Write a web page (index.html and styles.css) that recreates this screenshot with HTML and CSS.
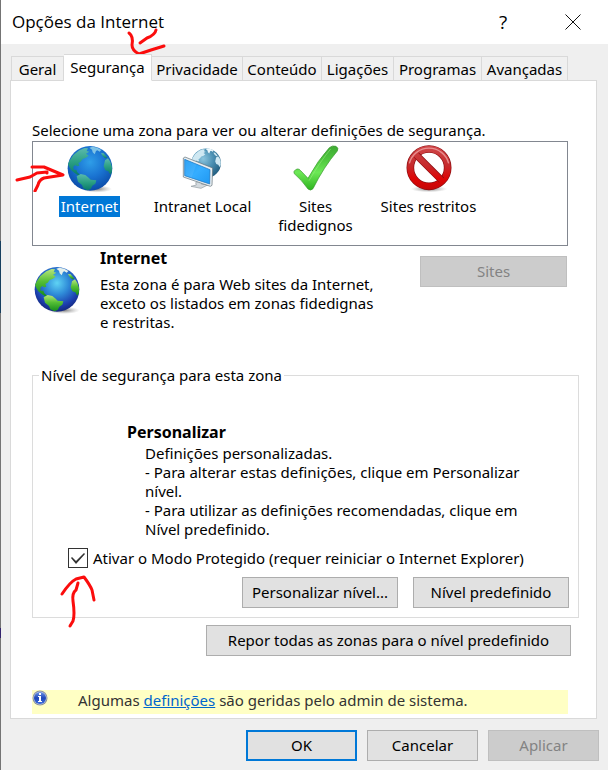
FILE: index.html
```html
<!DOCTYPE html>
<html lang="pt">
<head>
<meta charset="utf-8">
<meta name="viewport" content="width=device-width, initial-scale=1">
<title>Opções da Internet</title>
<link rel="stylesheet" href="styles.css">
</head>
<body>
<svg class="defs" aria-hidden="true">
  <defs>
    <radialGradient id="sea" cx=".5" cy=".36" r=".65"><stop offset="0" stop-color="#5fd3f4"/><stop offset=".4" stop-color="#2f8bd8"/><stop offset=".78" stop-color="#1c3fae"/><stop offset="1" stop-color="#13257a"/></radialGradient>
    <radialGradient id="sea-selected" cx=".5" cy=".36" r=".65"><stop offset="0" stop-color="#2f9ee8"/><stop offset=".5" stop-color="#1a74d2"/><stop offset="1" stop-color="#0b4aa8"/></radialGradient>
    <linearGradient id="land" x1="0" y1="0" x2="0" y2="1"><stop offset="0" stop-color="#b9e67c"/><stop offset=".45" stop-color="#55bf35"/><stop offset="1" stop-color="#138a1c"/></linearGradient>
    <linearGradient id="land-selected" x1="0" y1="0" x2="0" y2="1"><stop offset="0" stop-color="#5bb9ae"/><stop offset=".5" stop-color="#2ba083"/><stop offset="1" stop-color="#087a6a"/></linearGradient>
    <radialGradient id="steel" cx=".4" cy=".35" r=".7"><stop offset="0" stop-color="#8cc5de"/><stop offset=".5" stop-color="#4a8fb2"/><stop offset="1" stop-color="#1f5a7c"/></radialGradient>
    <linearGradient id="screen" x1="0" y1="0" x2="1" y2="1"><stop offset="0" stop-color="#1b9af4"/><stop offset=".5" stop-color="#35adff"/><stop offset="1" stop-color="#1f98f2"/></linearGradient>
    <linearGradient id="tick" x1="0" y1="0" x2="0" y2="1"><stop offset="0" stop-color="#3fa934"/><stop offset=".3" stop-color="#4dc63d"/><stop offset=".6" stop-color="#6de856"/><stop offset="1" stop-color="#2eb41f"/></linearGradient>
    <linearGradient id="ban" gradientUnits="userSpaceOnUse" x1="0" y1="2" x2="0" y2="134"><stop offset="0" stop-color="#d0484a"/><stop offset=".45" stop-color="#c62a2c"/><stop offset=".75" stop-color="#de0505"/><stop offset="1" stop-color="#c40808"/></linearGradient>
    <radialGradient id="shade"><stop offset="0" stop-color="#555" stop-opacity=".8"/><stop offset="1" stop-color="#999" stop-opacity="0"/></radialGradient>
    <linearGradient id="info" x1="0" y1="0" x2="0" y2="1"><stop offset="0" stop-color="#7098e8"/><stop offset=".5" stop-color="#2048b8"/><stop offset="1" stop-color="#3c6ce0"/></linearGradient>
    <g id="continents">
      <path d="M10 48L22 30 40 16 56 9 66 10 62 18 70 20 60 26 68 32 60 38 50 42 44 50 37 54 40 62 33 64 28 60 22 65 23 74 31 74 34 82 43 90 38 92 26 84 16 76 10 66 6 58z"/>
      <path d="M32 94L44 87 58 90 68 98 74 104 91 106 88 116 79 122 74 132 64 136 52 130 48 120 36 110z"/>
      <path d="M117 46L126 40 133 50 138 66 138 80 133 89 127 79 118 76 113 64z"/>
      <path d="M105 24L113 25 124 38 118 40 112 35 108 30z"/>
    </g>
    <path id="ice" d="M70 8L80 5 94 8 106 15 101 20 94 16 90 18 86 28 80 22 78 14z"/>
  </defs>
</svg>

<header class="titlebar">
  <h1 class="title">Opções da Internet</h1>
  <button class="caption" type="button" aria-label="Ajuda">?</button>
  <button class="caption" type="button" aria-label="Fechar">
    <svg width="16" height="16" viewBox="0 0 16 16"><path d="M.5.5L15.500 15.500M15.500.5L.5 15.500" stroke="#111" fill="none"/></svg>
  </button>
</header>

<main class="dialog">
  <div class="tabs" role="tablist">
    <button class="tab" type="button" role="tab">Geral</button>
    <button class="tab active" type="button" role="tab" aria-selected="true">Segurança</button>
    <button class="tab" type="button" role="tab">Privacidade</button>
    <button class="tab" type="button" role="tab">Conteúdo</button>
    <button class="tab" type="button" role="tab">Ligações</button>
    <button class="tab" type="button" role="tab">Programas</button>
    <button class="tab" type="button" role="tab">Avançadas</button>
  </div>

  <section class="panel" role="tabpanel">
    <p class="prompt">Selecione uma zona para ver ou alterar definições de segurança.</p>
    <div class="zones">
      <button class="zone" type="button">
        <svg width="48" height="48" viewBox="0 0 144 144"><ellipse cx="92" cy="132" rx="46" ry="11" fill="url(#shade)"/><circle cx="72" cy="70" r="67" fill="url(#sea-selected)"/><use href="#continents" fill="url(#land-selected)"/><use href="#ice" fill="#7fc3e6"/></svg>
        <span class="zone-name selected">Internet</span>
      </button>
      <button class="zone" type="button">
        <svg width="48" height="48" viewBox="0 0 144 144">
          <g transform="translate(34 7) scale(.66)"><circle cx="72" cy="72" r="67" fill="url(#steel)"/><use href="#continents" fill="#cfe8f2"/><use href="#ice" fill="#eef8fc"/></g>
          <path d="M50 113L66 105 68 118 88 119 66 130 36 124 52 120z" fill="#d4dade" stroke="#8e989f" stroke-width="2"/>
          <path d="M13 39L18 36 101 69 99 121 94 124 13 96z" fill="#e8eef1" stroke="#5c6c76" stroke-width="2"/>
          <path d="M17 43L93 74 92 117 17 92z" fill="url(#screen)" stroke="#1470bd" stroke-width="2"/>
          <path d="M18 44L52 58 38 98 18 91z" fill="#fff" opacity=".08"/>
        </svg>
        <span class="zone-name">Intranet Local</span>
      </button>
      <button class="zone" type="button">
        <svg width="48" height="48" viewBox="0 0 144 144"><path d="M6 85Q4 78 11 74L16 72Q22 71 26 77L48 100Q78 45 112 8Q121 0 132 4Q141 9 136 18Q95 66 63 131Q56 139 48 132Q30 106 6 85z" fill="url(#tick)" stroke="#35962b" stroke-width="2"/><path d="M51 107Q85 49 116 12" fill="none" stroke="#9bee86" stroke-width="3" opacity=".5"/></svg>
        <span class="zone-name">Sites<br>fidedignos</span>
      </button>
      <button class="zone" type="button">
        <svg width="48" height="48" viewBox="0 0 144 144"><ellipse cx="72" cy="132" rx="55" ry="10" fill="url(#shade)"/><circle cx="72" cy="68" r="56" fill="#fff" stroke="#8b0d10" stroke-width="23"/><circle cx="72" cy="68" r="56" fill="none" stroke="url(#ban)" stroke-width="19"/><path d="M34 30L110 106" stroke="#8b0d10" stroke-width="21"/><path d="M33 29L111 107" stroke="url(#ban)" stroke-width="17"/><path d="M13 55A61 61 0 0 1 131 55" fill="none" stroke="#efa3a3" stroke-width="4" opacity=".8"/></svg>
        <span class="zone-name">Sites restritos</span>
      </button>
    </div>

    <div class="zone-info">
      <svg class="zone-icon" width="48" height="48" viewBox="0 0 144 144"><ellipse cx="92" cy="133" rx="48" ry="11" fill="url(#shade)"/><circle cx="72" cy="70" r="67" fill="url(#sea)"/><use href="#continents" fill="url(#land)"/><use href="#ice" fill="#e4f0ec"/></svg>
      <div class="zone-text">
        <h2 class="heading">Internet</h2>
        <p>Esta zona é para Web sites da Internet, exceto os listados em zonas fidedignas e restritas.</p>
      </div>
      <button class="button sites" type="button" disabled>Sites</button>
    </div>

    <fieldset class="level">
      <legend>Nível de segurança para esta zona</legend>
      <div class="level-text">
        <h2 class="heading">Personalizar</h2>
        <div class="level-notes">
          <p>Definições personalizadas.</p>
          <p>- Para alterar estas definições, clique em Personalizar nível.</p>
          <p>- Para utilizar as definições recomendadas, clique em Nível predefinido.</p>
        </div>
      </div>
      <div class="protect">
        <input id="protected-mode" type="checkbox" checked>
        <label for="protected-mode">Ativar o Modo Protegido (requer reiniciar o Internet Explorer)</label>
      </div>
      <div class="level-actions">
        <button class="button" type="button">Personalizar nível...</button>
        <button class="button" type="button">Nível predefinido</button>
      </div>
    </fieldset>

    <button class="button reset" type="button">Repor todas as zonas para o nível predefinido</button>

    <div class="notice">
      <svg width="16" height="16" viewBox="0 0 16 16"><circle cx="8" cy="8" r="7.500" fill="#8b929e"/><circle cx="8" cy="8" r="6.500" fill="#c4d0ea"/><circle cx="8" cy="8" r="6" fill="url(#info)"/><path d="M7 3h2v2H7zM6 6h3v5h1v1H6v-1h1V7H6z" fill="#fff"/></svg>
      <p>Algumas <a href="#">definições</a> são geridas pelo admin de sistema.</p>
    </div>
  </section>

  <footer class="actions">
    <button class="button primary" type="button">OK</button>
    <button class="button" type="button">Cancelar</button>
    <button class="button" type="button" disabled>Aplicar</button>
  </footer>
</main>

<svg class="mark mark-tab" width="44" height="32" viewBox="0 0 44 32"><path d="M5 5C9 8 9 12 8 17C8 22 11 24 15 26L27 22 40 18M16 15L23 10Q31 7 32 2"/></svg>
<svg class="mark mark-zone" width="56" height="36" viewBox="0 0 56 36"><path d="M4 24L17 21 24 17 34 16 34 17M19 11L31 11 50 19 31 22Q26 24 25 29L22 35"/></svg>
<svg class="mark mark-check" width="40" height="56" viewBox="0 0 40 56"><path d="M4 21Q12 9 18 6L26 4Q32 12 34 17L36 27M20 10L18 17Q14 20 15 28Q17 42 15 48L12 53"/></svg>
</body>
</html>
```
FILE: styles.css
```css
* {
  box-sizing: border-box;
}

body {
  position: relative;
  display: flex;
  flex-direction: column;
  min-height: 100vh;
  margin: 0;
  padding-left: 1px;
  background: linear-gradient(#747474 0 241px, #173f5f 241px 313px, #747474 313px 628px, #33236e 628px 638px, #747474 638px) 0 0 / 1px 100% no-repeat #efefef;
  color: #000;
  font: 15px/19px "Noto Sans", sans-serif;
}

h1, h2, p {
  margin: 0;
}

button {
  margin: 0;
  padding: 0;
  color: inherit;
  font: inherit;
}

.defs {
  position: absolute;
  width: 0;
  height: 0;
}

.titlebar {
  display: flex;
  align-items: center;
  height: 44px;
  padding-left: 11px;
  background: #fff;
}

.title {
  flex: 1;
  font: 17px/24px "Open Sans", sans-serif;
}

.caption {
  display: flex;
  align-items: center;
  justify-content: center;
  width: 70px;
  height: 44px;
  border: 0;
  background: none;
  font: 19px/24px "Open Sans", sans-serif;
}

.dialog {
  display: flex;
  flex: 1;
  flex-direction: column;
  padding: 10px 9px 9px;
}

.tabs {
  display: grid;
  grid-template-columns: 53fr 88fr 91fr 79fr 72fr 88fr 86fr;
  align-items: end;
  margin: 0 31px -1px 1px;
}

.tab {
  height: 25px;
  padding-top: 1px;
  border: 1px solid #d9d9d9;
  border-left-width: 0;
  background: #f0f0f0;
  white-space: nowrap;
}

.tab:first-child {
  border-left-width: 1px;
}

.tab.active {
  z-index: 1;
  height: 27px;
  padding: 0;
  border-bottom-color: #fff;
  background: #fff;
}

.panel {
  display: flex;
  flex: 1;
  flex-direction: column;
  margin-right: 2px;
  padding: 40px 17px 4px 21px;
  border: 1px solid #d9d9d9;
  background: #fff;
}

.zones {
  display: grid;
  grid-template-columns: repeat(4, 113px);
  align-items: start;
  height: 105px;
  margin: 1px 11px 0 0;
  padding-top: 3px;
  border: 1px solid #828790;
}

.zone {
  display: flex;
  flex-direction: column;
  align-items: center;
  gap: 3px;
  border: 0;
  background: none;
}

.zone-name {
  padding: 1px 2px;
}

.zone-name.selected {
  background: #0078d7;
  color: #fff;
}

.zone-info {
  display: flex;
  align-items: flex-start;
  margin-right: 12px;
  padding-top: 3px;
}

.zone-icon {
  margin: 17px 18px 0 1px;
}

.zone-text {
  flex: 1;
  padding-left: 1px;
}

.zone-text p {
  max-width: 282px;
  margin-top: 7px;
}

.heading {
  font-size: 16px;
  line-height: 19px;
}

.button {
  height: 31px;
  padding: 0 8px;
  border: 1px solid #adadad;
  background: #e1e1e1;
  white-space: nowrap;
}

.button:disabled {
  border-color: #bfbfbf;
  background: #ccc;
  color: #838383;
}

.button.primary {
  border: 2px solid #0078d7;
}

.sites {
  width: 147px;
  margin-top: 7px;
}

.level {
  min-width: 0;
  margin: 34px 0 0;
  padding: 38px 9px 9px 35px;
  border: 1px solid #dcdcdc;
}

.level legend {
  margin-left: -29px;
  padding: 0 2px;
}

.level-text {
  padding-left: 59px;
}

.level-notes {
  max-width: 420px;
  margin-top: 2px;
  padding-left: 18px;
}

.protect {
  display: flex;
  align-items: center;
  gap: 5px;
  margin: 9px 0;
  white-space: nowrap;
}

.protect input {
  width: 20px;
  height: 20px;
  margin: 0;
  border: 1px solid #333;
  background: #fff;
  appearance: none;
}

.protect input:checked::after {
  display: block;
  width: 18px;
  height: 18px;
  background: #333;
  clip-path: polygon(2px 9px, 3px 8px, 7px 12px, 15px 4px, 16px 5px, 7px 15px);
  content: "";
}

.level-actions {
  display: grid;
  grid-template-columns: 156px 156px;
  gap: 15px;
  justify-content: end;
}

.reset {
  align-self: flex-end;
  width: 365px;
  margin: 7px 8px 34px 0;
}

.notice {
  display: flex;
  gap: 30px;
  height: 24px;
  margin: auto 11px 0 0;
  background: #ffffc4;
  color: #333;
}

.notice p {
  padding-top: 1px;
}

.notice a {
  color: #06c;
}

.actions {
  display: grid;
  grid-template-columns: repeat(3, 111px);
  gap: 10px;
  justify-content: end;
  margin-top: 11px;
}

.mark {
  position: absolute;
  fill: none;
  stroke: #fb0d0d;
  stroke-width: 3;
  stroke-linecap: round;
  stroke-linejoin: round;
  pointer-events: none;
}

.mark-tab {
  top: 28px;
  left: 124px;
}

.mark-zone {
  top: 156px;
  left: 13px;
}

.mark-check {
  top: 573px;
  left: 58px;
}
```
